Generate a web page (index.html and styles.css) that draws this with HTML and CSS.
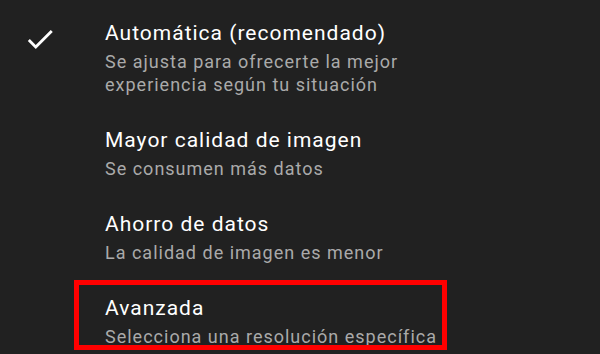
FILE: index.html
```html
<!DOCTYPE html>
<html lang="es">
<head>
    <meta charset="UTF-8">
    <meta name="viewport" content="width=device-width, initial-scale=1.0">
    <title>Calidad de video</title>
    <link rel="stylesheet" href="styles.css">
</head>
<body>
    <ul class="quality-list">
        <li class="option selected">
            <span class="check">
                <svg viewBox="0 0 24 24" width="34" height="34"><path d="M9 16.17L4.83 12l-1.42 1.41L9 19 21 7l-1.41-1.41z" fill="#fff"/></svg>
            </span>
            <div class="text">
                <div class="title">Automática (recomendado)</div>
                <div class="subtitle">Se ajusta para ofrecerte la mejor<br>experiencia según tu situación</div>
            </div>
        </li>
        <li class="option">
            <span class="check"></span>
            <div class="text">
                <div class="title">Mayor calidad de imagen</div>
                <div class="subtitle">Se consumen más datos</div>
            </div>
        </li>
        <li class="option">
            <span class="check"></span>
            <div class="text">
                <div class="title">Ahorro de datos</div>
                <div class="subtitle">La calidad de imagen es menor</div>
            </div>
        </li>
        <li class="option highlighted">
            <span class="check"></span>
            <div class="text">
                <div class="title">Avanzada</div>
                <div class="subtitle">Selecciona una resolución específica</div>
            </div>
        </li>
    </ul>
</body>
</html>
```

FILE: styles.css
```css
body {
    margin: 0;
    background-color: #212121;
    font-family: Roboto, "Noto Sans", sans-serif;
    height: 354px;
    overflow: hidden;
}
.quality-list {
    list-style: none;
    margin: 0;
    padding: 4px 0 0 0;
}
.option {
    display: flex;
    padding: 15px 0;
    position: relative;
}
.check {
    width: 105px;
    flex-shrink: 0;
    display: flex;
    padding-left: 23px;
    box-sizing: border-box;
}
.check svg {
    margin-top: 3px;
}
.title {
    color: #fff;
    font-size: 21px;
    line-height: 28px;
    letter-spacing: 1px;
}
.subtitle {
    color: #aaa;
    font-size: 18px;
    line-height: 23px;
    letter-spacing: 1px;
    margin-top: 3px;
}
.highlighted::after {
    content: "";
    position: absolute;
    left: 74px;
    top: 1px;
    width: 373px;
    height: 70px;
    border: 5px solid #ff0000;
    box-sizing: border-box;
}
```
